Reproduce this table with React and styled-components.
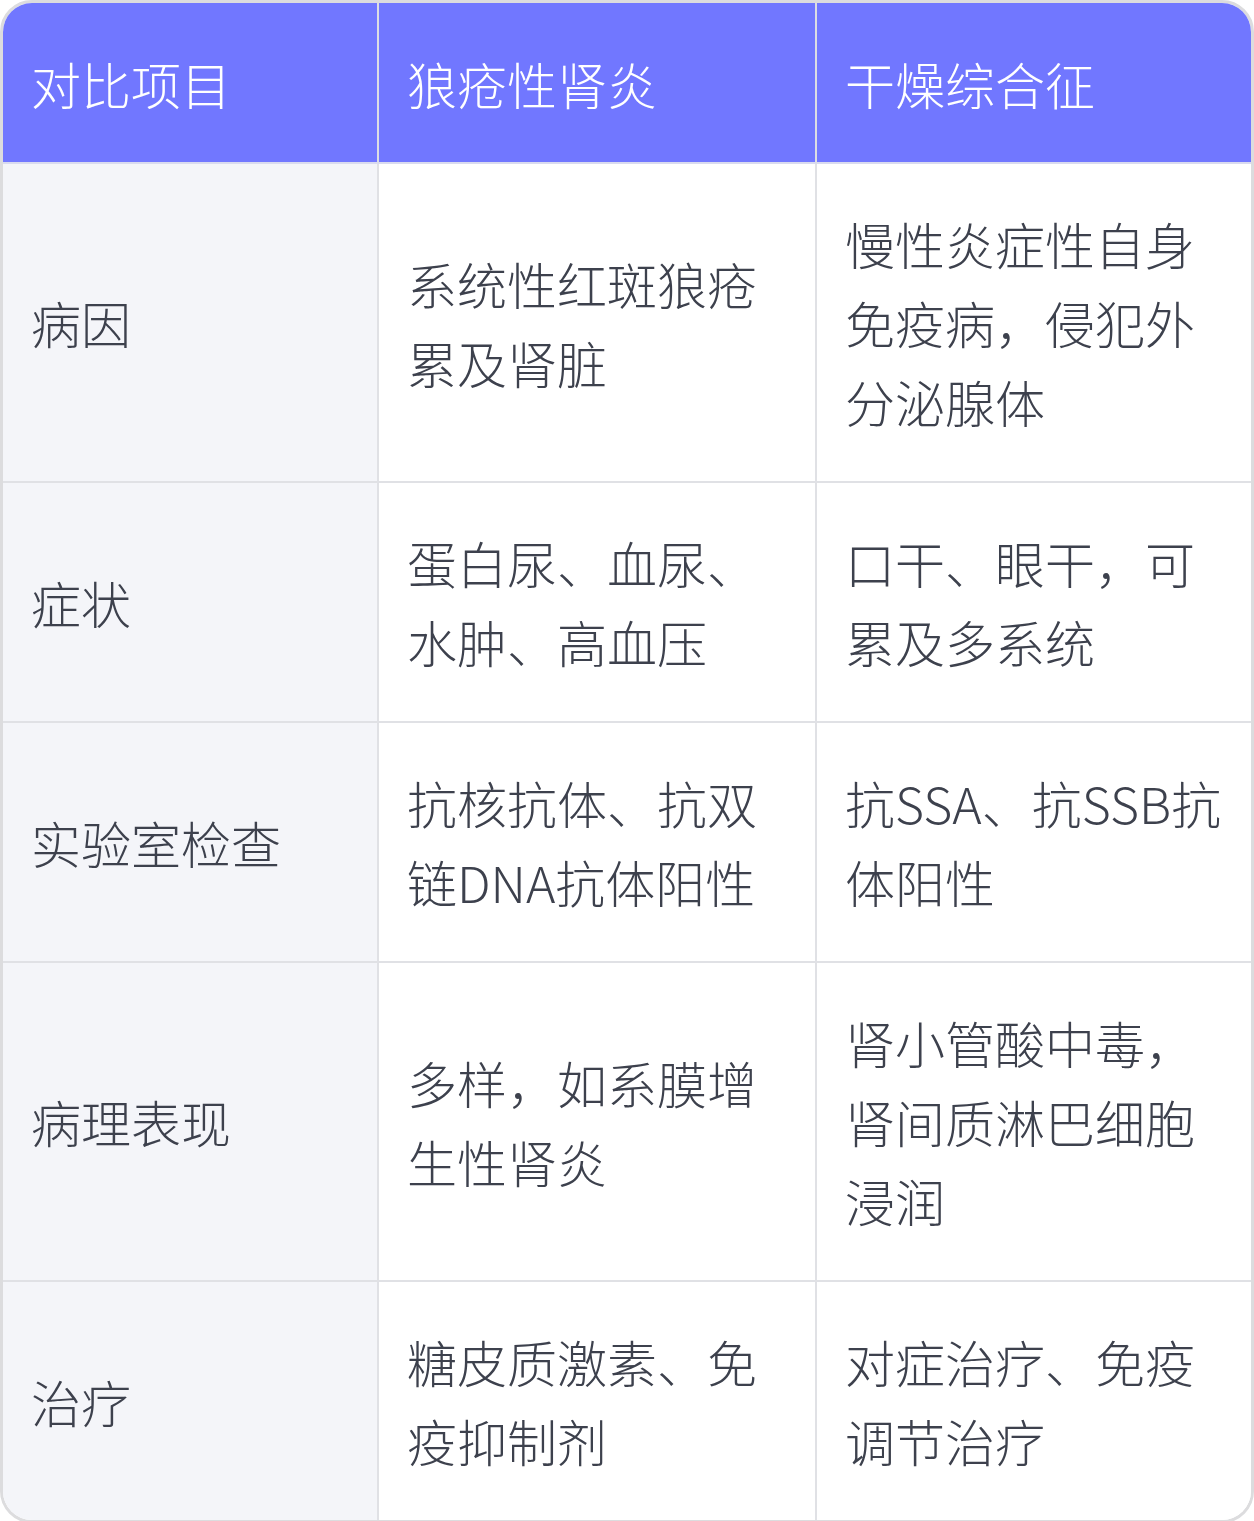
import React from "react";
import styled, { createGlobalStyle } from "styled-components";

const Global = createGlobalStyle`
  html, body { margin: 0; padding: 0; background: #ffffff; }
  body { font-family: "Noto Sans CJK SC", "Noto Sans", sans-serif; }
`;

const Frame = styled.div`
  width: 1254px;
  box-sizing: border-box;
  border: 3px solid #dcdcde;
  border-radius: 32px;
  overflow: hidden;
  background: #ffffff;
`;

const Table = styled.table`
  width: 100%;
  table-layout: fixed;
  border-collapse: separate;
  border-spacing: 0;
  font-family: "Noto Sans CJK SC", "Noto Sans", sans-serif;
  font-size: 50px;
  font-weight: 300;
  line-height: 79px;
`;

const Col = styled.col`
  width: ${(p) => p.$w}px;
`;

const HeadCell = styled.th`
  background: #7177ff;
  color: #ffffff;
  font-weight: 300;
  text-align: left;
  vertical-align: middle;
  padding: 41px 28px 39px;
  border-bottom: 2px solid #d9dbef;
  border-right: ${(p) => (p.$last ? "none" : "2px solid #dcdde3")};
`;

const Cell = styled.td`
  background: ${(p) => (p.$label ? "#f4f5f9" : "#ffffff")};
  color: #3d414d;
  vertical-align: middle;
  padding: 40px 28px;
  word-break: break-all;
  border-bottom: ${(p) => (p.$lastRow ? "none" : "2px solid #e0e1e5")};
  border-right: ${(p) => (p.$last ? "none" : "2px solid #e0e1e5")};
`;

const widths = [376, 438, 434];
const headers = ["对比项目", "狼疮性肾炎", "干燥综合征"];
const rows = [
  ["病因", "系统性红斑狼疮累及肾脏", "慢性炎症性自身免疫病，侵犯外分泌腺体"],
  ["症状", "蛋白尿、血尿、水肿、高血压", "口干、眼干，可累及多系统"],
  ["实验室检查", "抗核抗体、抗双链DNA抗体阳性", "抗SSA、抗SSB抗体阳性"],
  ["病理表现", "多样，如系膜增生性肾炎", "肾小管酸中毒，肾间质淋巴细胞浸润"],
  ["治疗", "糖皮质激素、免疫抑制剂", "对症治疗、免疫调节治疗"],
];

export default function App() {
  return (
    <>
      <Global />
      <Frame>
        <Table>
          <colgroup>
            {widths.map((w, i) => (
              <Col key={i} $w={w} />
            ))}
          </colgroup>
          <thead>
            <tr>
              {headers.map((h, i) => (
                <HeadCell key={h} $last={i === headers.length - 1}>
                  {h}
                </HeadCell>
              ))}
            </tr>
          </thead>
          <tbody>
            {rows.map((r, ri) => (
              <tr key={r[0]}>
                {r.map((c, ci) => (
                  <Cell
                    key={ci}
                    $label={ci === 0}
                    $last={ci === r.length - 1}
                    $lastRow={ri === rows.length - 1}
                  >
                    {c}
                  </Cell>
                ))}
              </tr>
            ))}
          </tbody>
        </Table>
      </Frame>
    </>
  );
}
